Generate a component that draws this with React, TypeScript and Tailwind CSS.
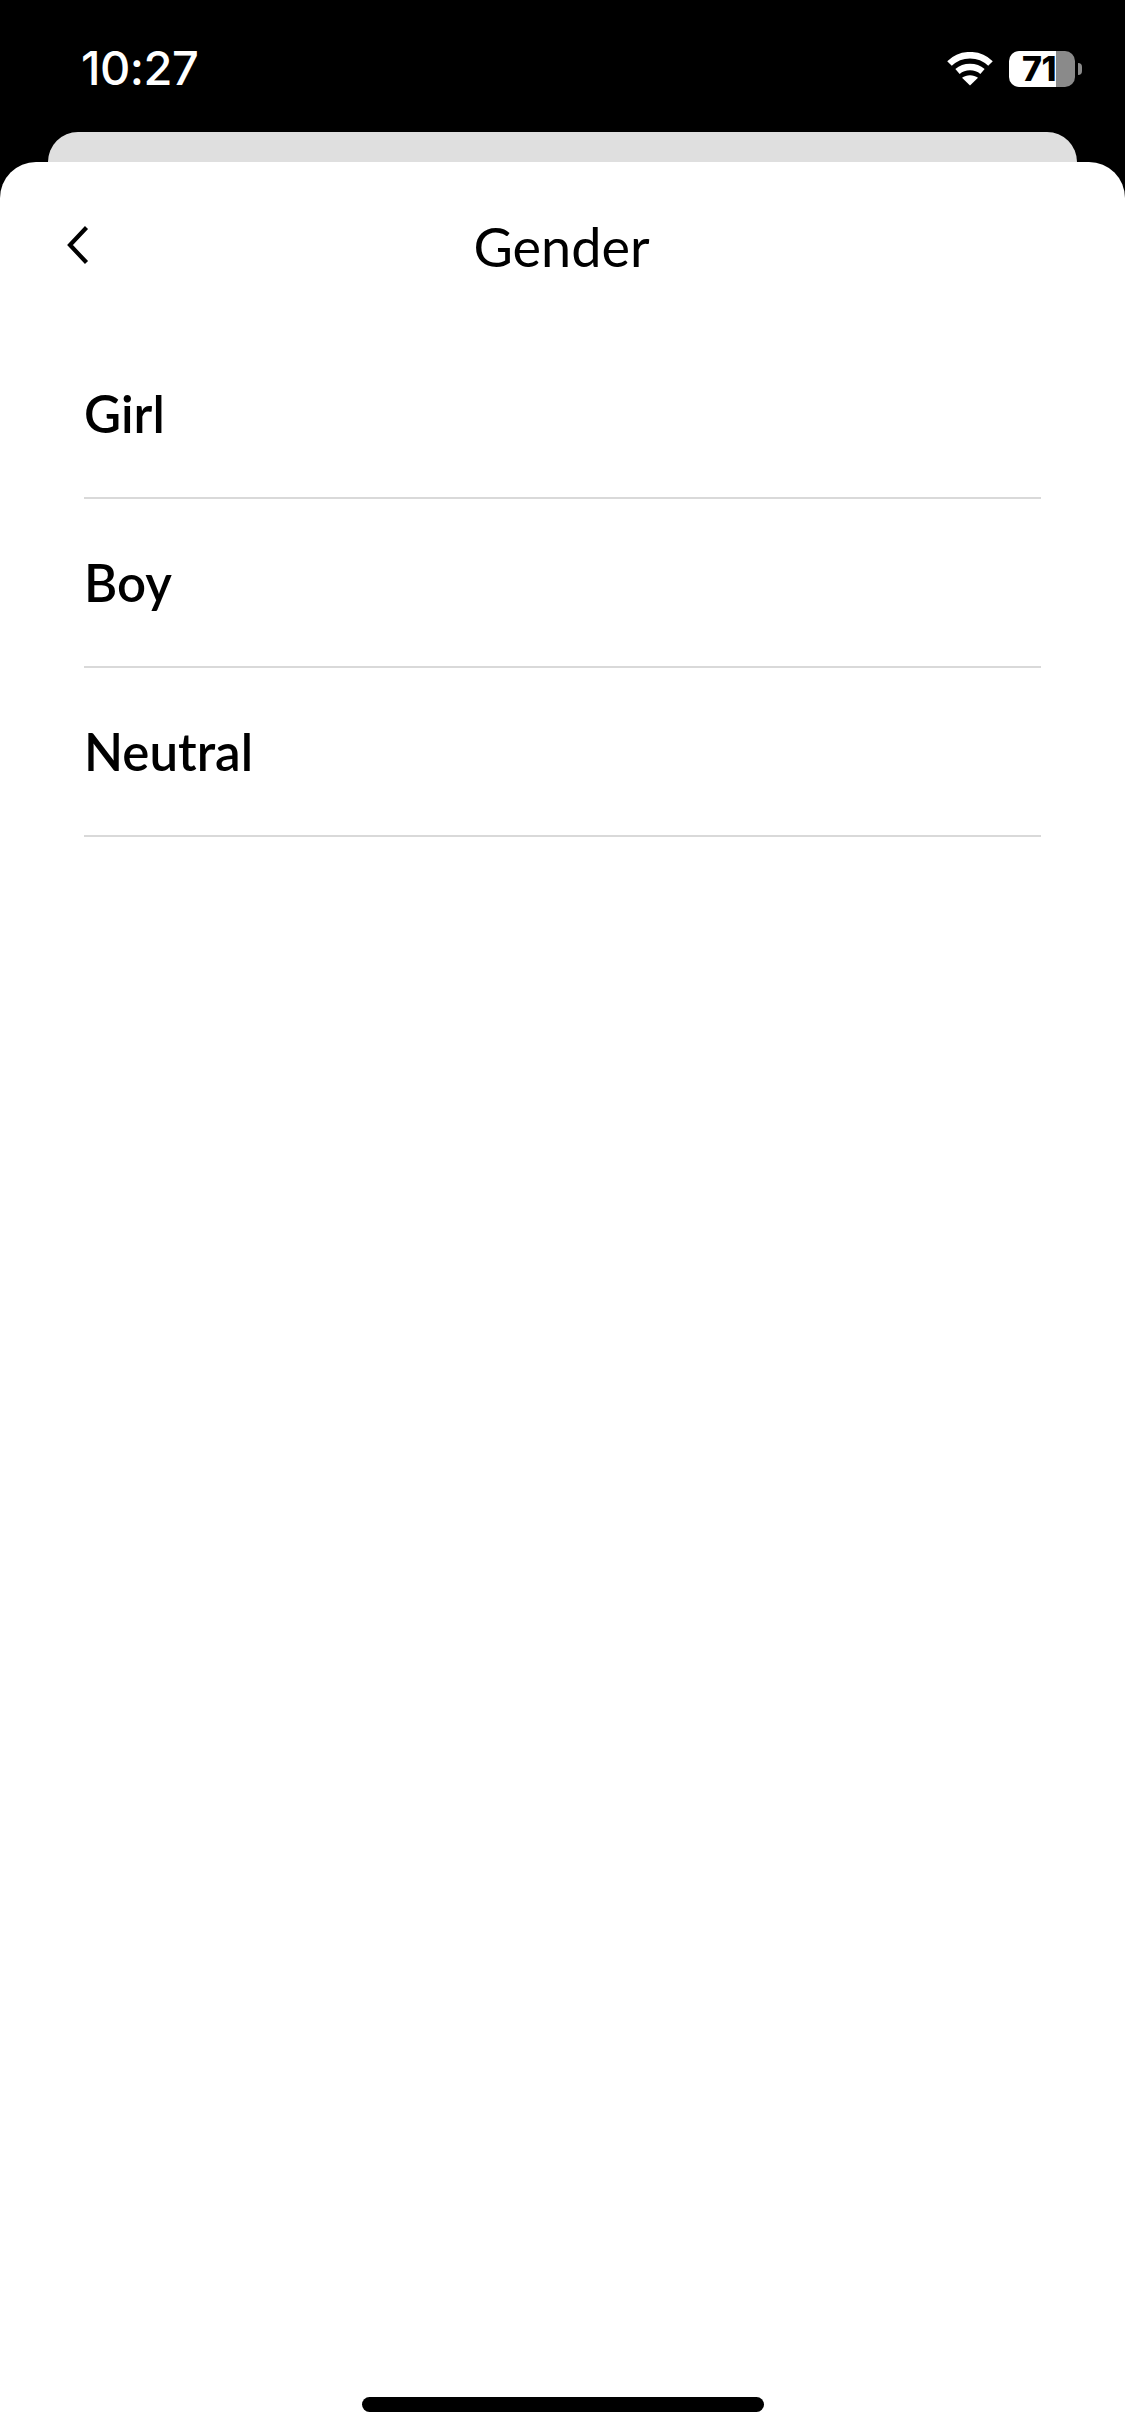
/**
 * Gender picker sheet
 */

const options = ['Girl', 'Boy', 'Neutral']

function WifiIcon() {
  return (
    <svg width="46" height="34" viewBox="0 0 46 34" fill="none" className="shrink-0">
      <path d="M2.5 11.5C13.8 0.4 32.2 0.4 43.5 11.5" stroke="white" strokeWidth="6.5" strokeLinecap="butt" />
      <path d="M10.5 19.5C17.4 13.4 28.6 13.4 35.5 19.5" stroke="white" strokeWidth="6.5" strokeLinecap="butt" />
      <path d="M23 33.5L15 25.8C19.4 22.4 26.6 22.4 31 25.8L23 33.5Z" fill="white" />
    </svg>
  )
}

function Battery() {
  return (
    <div className="flex items-center gap-[3px]">
      <div className="flex h-[36px] w-[66px]">
        <div className="flex h-full w-[47px] items-center justify-end rounded-l-[10px] bg-white">
          <span className="font-['Inter',sans-serif] text-[34px] leading-[36px] font-extrabold tracking-[-0.5px] text-black">71</span>
        </div>
        <div className="h-full flex-1 rounded-r-[10px] bg-[#8a8a8a]" />
      </div>
      <div className="h-[12px] w-[4px] rounded-r-full bg-[#8a8a8a]" />
    </div>
  )
}

export default function App() {
  return (
    <div className="flex h-[2436px] w-[1125px] flex-col overflow-hidden bg-black font-['Lato',sans-serif]">
      {/* Status bar */}
      <div className="flex h-[132px] shrink-0 items-start justify-between pt-[46px] pr-[43px] pl-[81px]">
        <span className="font-['Inter',sans-serif] text-[47px] leading-[44px] font-medium tracking-[-0.5px] text-white">10:27</span>
        <div className="flex items-center gap-[16px] pt-[5px]">
          <WifiIcon />
          <Battery />
        </div>
      </div>

      {/* Sheet behind */}
      <div className="mx-[48px] h-[30px] shrink-0 rounded-t-[36px] bg-[#dfdfdf]" />

      {/* Sheet */}
      <div className="relative z-10 flex flex-1 flex-col rounded-t-[36px] bg-white">
        <div className="grid h-[168px] shrink-0 grid-cols-[1fr_auto_1fr] items-start pt-[53px]">
          <svg width="30" height="44" viewBox="0 0 30 44" fill="none" className="mt-[8px] ml-[63px]">
            <path d="M23.5 4.5L7 22L23.5 39.5" stroke="black" strokeWidth="4.2" />
          </svg>
          <h1 className="-translate-x-[1px] text-[54px] leading-[64px] font-normal text-black">Gender</h1>
        </div>

        <ul className="px-[84px]">
          {options.map((option) => (
            <li key={option} className="flex h-[169px] items-center border-b-2 border-[#d9d9d9] pt-[2px] text-[51px] font-semibold text-black">
              {option}
            </li>
          ))}
        </ul>

        {/* Home indicator */}
        <div className="mt-auto flex justify-center pb-[24px]">
          <div className="h-[15px] w-[402px] rounded-full bg-black" />
        </div>
      </div>
    </div>
  )
}
